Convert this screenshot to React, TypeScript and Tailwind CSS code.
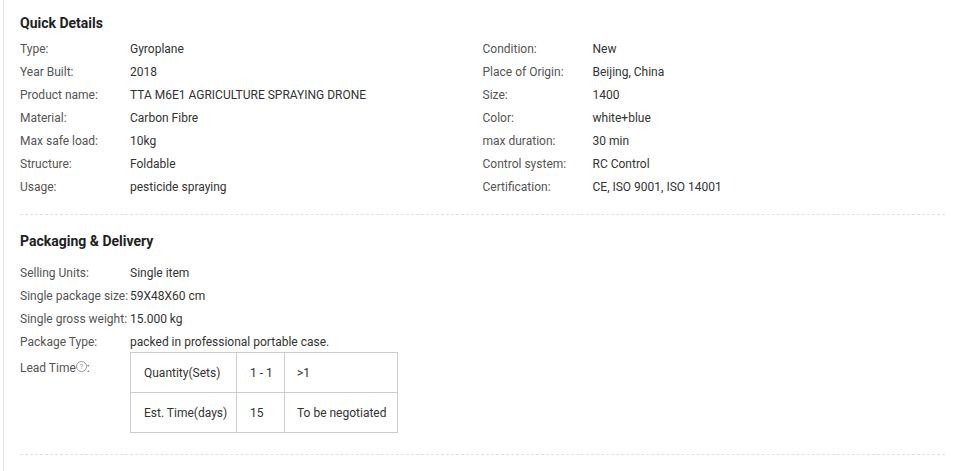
const quick: [string,string,string,string][] = [
["Type:","Gyroplane","Condition:","New"],
["Year Built:","2018","Place of Origin:","Beijing, China"],
["Product name:","TTA M6E1 AGRICULTURE SPRAYING DRONE","Size:","1400"],
["Material:","Carbon Fibre","Color:","white+blue"],
["Max safe load:","10kg","max duration:","30 min"],
["Structure:","Foldable","Control system:","RC Control"],
["Usage:","pesticide spraying","Certification:","CE, ISO 9001, ISO 14001"],
];
const pack: [string,string][] = [
["Selling Units:","Single item"],
["Single package size:","59X48X60 cm"],
["Single gross weight:","15.000 kg"],
["Package Type:","packed in professional portable case."],
];
export default function App(){
return <div className="w-[957px] h-[471px] bg-white overflow-hidden text-[12px] text-[#333]" style={{fontFamily:"Roboto, sans-serif"}}>
<div className="ml-[3px] border-l border-[#e5e5e5] h-full pl-[16px] pr-[12px]">
<div className="pt-[13px] text-[14px] font-bold text-[#222] leading-[20px]">Quick Details</div>
<div className="mt-[4px] grid grid-cols-2 gap-x-0">
{quick.map((r,i)=><div key={i} className="contents">
<div className="flex h-[23px] items-center"><span className="w-[110px] text-[#555]">{r[0]}</span><span>{r[1]}</span></div>
<div className="flex h-[23px] items-center"><span className="w-[110px] text-[#555]">{r[2]}</span><span>{r[3]}</span></div>
</div>)}
</div>
<div className="mt-[16px] border-t border-dashed border-[#e0e0e0]"></div>
<div className="pt-[16px] text-[14px] font-bold text-[#222] leading-[20px]">Packaging &amp; Delivery</div>
<div className="mt-[10px]">
{pack.map((r,i)=><div key={i} className="flex h-[23px] items-center"><span className="min-w-[110px] text-[#555]">{r[0]}</span><span>{r[1]}</span></div>)}
<div className="flex mt-[6px]">
<span className="w-[110px] text-[#555] flex items-start h-[16px]">Lead Time<span className="inline-flex w-[11px] h-[11px] rounded-full border border-[#999] text-[8px] items-center justify-center mt-[2px] text-[#999]">?</span>:</span>
<table className="border-collapse mt-[-7px]">
<tbody>
<tr className="h-[40px]"><td className="border border-[#ccc] w-[106px] pl-[13px]">Quantity(Sets)</td><td className="border border-[#ccc] w-[48px] pl-[13px]">1 - 1</td><td className="border border-[#ccc] w-[113px] pl-[12px]">&gt;1</td></tr>
<tr className="h-[40px]"><td className="border border-[#ccc] pl-[13px]">Est. Time(days)</td><td className="border border-[#ccc] pl-[13px]">15</td><td className="border border-[#ccc] pl-[12px]">To be negotiated</td></tr>
</tbody></table>
</div>
</div>
<div className="mt-[21px] border-t border-dashed border-[#e0e0e0]"></div>
</div></div>
}
